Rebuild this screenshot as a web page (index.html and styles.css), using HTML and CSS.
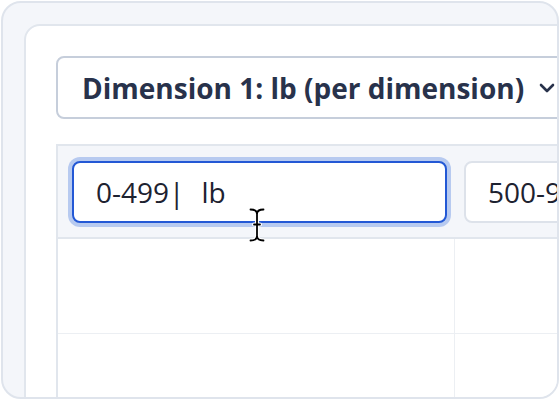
FILE: index.html
```html
<!DOCTYPE html>
<html>
<head>
<meta charset="utf-8">
<link rel="stylesheet" href="styles.css">
</head>
<body>
<div class="frame">
  <div class="card">
    <div class="select">
      <span class="select-label">Dimension 1: lb (per dimension)</span>
      <svg class="chevron" width="16" height="10" viewBox="0 0 16 10"><path d="M2 2 L8 8 L14 2" fill="none" stroke="#28324b" stroke-width="2.6" stroke-linecap="round" stroke-linejoin="round"/></svg>
    </div>
    <div class="table">
      <div class="head">
        <div class="hcell first">
          <div class="input focused">
            <span class="value">0-499|</span><span class="unit">lb</span>
            <svg class="ibeam" width="16" height="34" viewBox="0 0 16 34">
              <g fill="none" stroke-linecap="round">
                <path d="M1.5 1.5 C5 1.5 8 2.5 8 6 V28 C8 31.5 5 32.5 1.5 32.5 M14.5 1.5 C11 1.5 8 2.5 8 6 M8 28 C8 31.5 11 32.5 14.5 32.5 M5 16.5 H11" stroke="#fff" stroke-width="4"/>
                <path d="M1.5 1.5 C5 1.5 8 2.5 8 6 V28 C8 31.5 5 32.5 1.5 32.5 M14.5 1.5 C11 1.5 8 2.5 8 6 M8 28 C8 31.5 11 32.5 14.5 32.5 M5 16.5 H11" stroke="#000" stroke-width="1.8"/>
              </g>
            </svg>
          </div>
        </div>
        <div class="hcell second">
          <div class="input"><span class="value">500-999</span><span class="unit">lb</span></div>
        </div>
      </div>
      <div class="row">
        <div class="cell first"></div>
        <div class="cell"></div>
      </div>
      <div class="row">
        <div class="cell first"></div>
        <div class="cell"></div>
      </div>
    </div>
  </div>
</div>
</body>
</html>
```
FILE: styles.css
```css
* { box-sizing: border-box; }
html, body { margin: 0; padding: 0; background: #ffffff; }
body { width: 560px; height: 400px; overflow: hidden; font-family: "Open Sans", "Noto Sans", sans-serif; }

.frame {
  margin: 1px;
  width: 558px;
  height: 398px;
  border: 2px solid #dfe4ec;
  border-radius: 20px;
  background: #f4f6fa;
  overflow: hidden;
  padding: 21px 0 0 21px;
}

.card {
  width: 640px;
  height: 520px;
  border: 2px solid #e1e6ed;
  border-radius: 16px;
  background: #ffffff;
  padding: 30px;
}

.select {
  display: flex;
  align-items: center;
  width: 620px;
  height: 63px;
  border: 2px solid #c6cedb;
  border-radius: 8px;
  padding-left: 24px;
  background: #fff;
}
.select-label {
  font-weight: 700;
  font-size: 28px;
  color: #28324b;
  white-space: nowrap;
}
.chevron { margin-left: 15px; flex: none; }

.table {
  margin-top: 25px;
  width: 620px;
  border-left: 2px solid #e1e6ed;
  border-top: 2px solid #e1e6ed;
}
.head {
  display: grid;
  grid-template-columns: 397px 1fr;
  background: #f4f6fa;
  border-bottom: 2px solid #e1e6ed;
}
.hcell.first { padding: 15px 8px 14px 14px; }
.hcell.second { padding: 15px 0 14px 9px; }

.input {
  position: relative;
  display: flex;
  align-items: center;
  height: 62px;
  width: 375px;
  border: 2px solid #dde2ea;
  border-radius: 8px;
  background: #fff;
  padding-left: 22px;
  font-size: 28px;
  color: #1d2230;
  white-space: nowrap;
}
.input.focused {
  border-color: #2358d5;
  box-shadow: 0 0 0 4px #b7caf0;
}
.unit { margin-left: 17px; }

.ibeam {
  position: absolute;
  left: 175px;
  top: 45px;
}

.row {
  display: grid;
  grid-template-columns: 397px 1fr;
  height: 95px;
  border-bottom: 1px solid #eceff3;
}
.cell.first { border-right: 1px solid #eceff3; }
```
